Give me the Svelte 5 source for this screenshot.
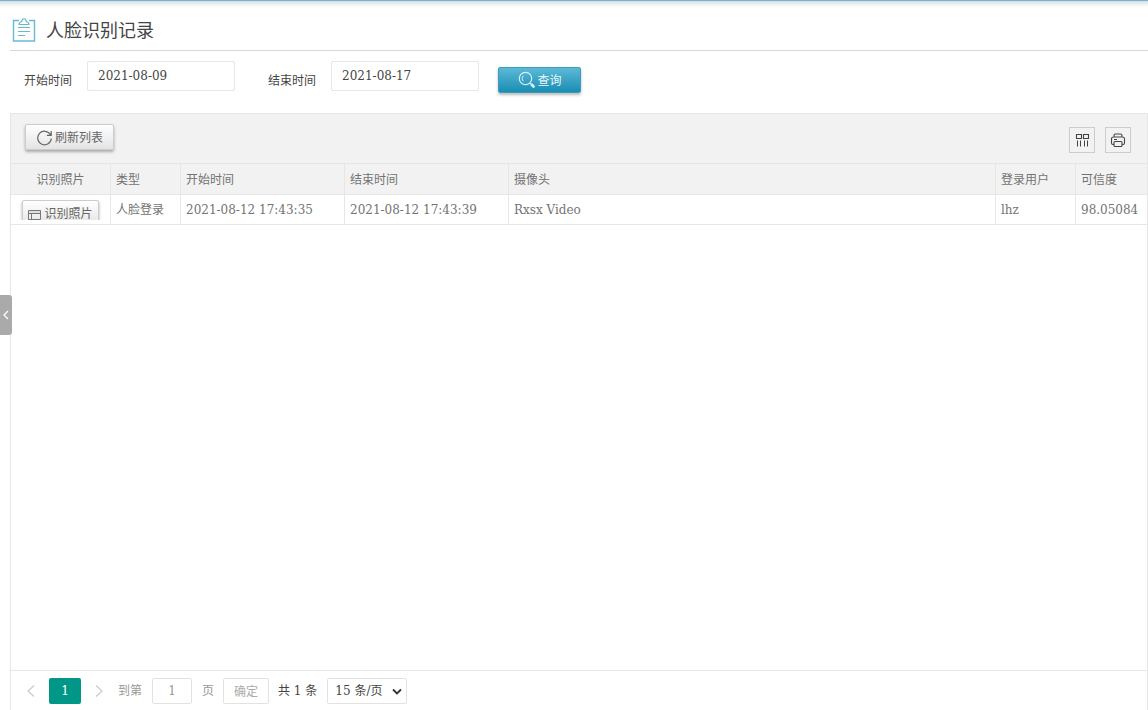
<script>
  let startDate = $state('2021-08-09');
  let endDate = $state('2021-08-17');
  let page = $state(1);
  let pageSize = $state('15');

  const rows = [
    {
      type: '人脸登录',
      start: '2021-08-12 17:43:35',
      end: '2021-08-12 17:43:39',
      camera: 'Rxsx Video',
      user: 'lhz',
      score: '98.05084'
    }
  ];
</script>

<div class="page">
  <header class="title">
    <svg width="24" height="24" viewBox="0 0 24 24" fill="none" stroke="#67b9d3" aria-hidden="true">
      <path d="M7 2.500H1.500v20.500h21v-20.500H17" stroke-width="1.400" />
      <path d="M7 6.500q.2-2.500 2.800-3C9.800-.2 14.200-.2 14.200 3.500q2.600.5 2.800 3z" stroke-width="1.200" />
      <path d="M6 9.500h12M6 13.500h12M6 17.500h7" stroke-width="1.100" />
    </svg>
    <h1>人脸识别记录</h1>
  </header>

  <form class="search" onsubmit={(e) => e.preventDefault()}>
    <label for="start">开始时间</label>
    <input id="start" type="text" bind:value={startDate} />
    <label class="second" for="end">结束时间</label>
    <input id="end" type="text" bind:value={endDate} />
    <button class="query" type="submit">
      <svg width="18" height="18" viewBox="0 0 18 18" fill="none" stroke="#d4f0f8" aria-hidden="true">
        <circle cx="7.500" cy="7.500" r="6.200" stroke-width="1.200" />
        <path d="M5.200 10.200a4 4 0 0 1 0-5.400" />
        <path d="M12 12l1.500 1.500" />
        <path d="M13.800 13.800l1.700 1.700" stroke-width="2.800" stroke-linecap="round" />
      </svg>
      <span>查询</span>
    </button>
  </form>

  <main class="grid">
    <div class="toolbar">
      <button class="raised refresh" type="button">
        <svg width="17" height="17" viewBox="0 0 17 17" fill="none" stroke="#666" stroke-width="1.200" aria-hidden="true">
          <path d="M14.500 5.800A6.800 6.800 0 1 0 15.300 9.500M15.200 2v4.300h-4.300" />
        </svg>
        <span>刷新列表</span>
      </button>
      <div class="tools">
        <button type="button" aria-label="筛选列">
          <svg width="16" height="16" viewBox="0 0 16 16" fill="none" stroke="#444" aria-hidden="true">
            <path d="M2.500 2.500h5v4h-5zM9.500 2.500h5v4h-5z" stroke-width="1.100" />
            <path d="M3.500 8.500v6M6.500 8.500v6M10.500 8.500v6M13.500 8.500v6" />
          </svg>
        </button>
        <button type="button" aria-label="打印">
          <svg width="16" height="16" viewBox="0 0 16 16" fill="none" stroke="#444" stroke-width="1.100" aria-hidden="true">
            <path d="M4 5V3.500q0-1.500 1.500-1.500h5q1.500 0 1.500 1.500V5M4 12.500H3q-1.500 0-1.500-1.500V7q0-2 2-2h9q2 0 2 2v4q0 1.500-1.500 1.500h-1M4 7.500h3" />
            <rect x="4" y="9.500" width="8" height="5" rx="1" />
          </svg>
        </button>
      </div>
    </div>

    <table>
      <colgroup>
        <col class="c-photo" /><col class="c-type" /><col class="c-time" /><col class="c-time" />
        <col /><col class="c-user" /><col class="c-score" />
      </colgroup>
      <thead>
        <tr>
          <th class="photo">识别照片</th>
          <th>类型</th>
          <th>开始时间</th>
          <th>结束时间</th>
          <th>摄像头</th>
          <th>登录用户</th>
          <th>可信度</th>
        </tr>
      </thead>
      <tbody>
        {#each rows as row}
          <tr>
            <td class="photo">
              <div class="clip">
                <button class="raised small" type="button">
                  <svg width="13" height="13" viewBox="0 0 13 13" fill="none" stroke="#777" aria-hidden="true">
                    <path d="M.5 3.500h12v9H.5zM.5 6.500h12M3.500 6.500v6" />
                    <path d="M1 5h11" stroke="#ccc" />
                  </svg>
                  <span>识别照片</span>
                </button>
              </div>
            </td>
            <td>{row.type}</td>
            <td>{row.start}</td>
            <td>{row.end}</td>
            <td>{row.camera}</td>
            <td>{row.user}</td>
            <td>{row.score}</td>
          </tr>
        {/each}
      </tbody>
    </table>

    <nav class="pager" aria-label="分页">
      <button class="arrow" type="button" aria-label="上一页">
        <svg width="10" height="14" viewBox="0 0 10 14" fill="none" stroke="#ccc" stroke-width="1.300"><path d="M8 1.500L2 7l6 5.500" /></svg>
      </button>
      <button class="current" type="button" aria-current="page">1</button>
      <button class="arrow" type="button" aria-label="下一页">
        <svg width="10" height="14" viewBox="0 0 10 14" fill="none" stroke="#ccc" stroke-width="1.300"><path d="M2 1.500L8 7l-6 5.500" /></svg>
      </button>
      <label class="jump">到第 <input type="text" bind:value={page} /> 页</label>
      <button class="confirm" type="button"><span>确定</span></button>
      <span class="total">共 1 条</span>
      <span class="size">
        <select aria-label="每页条数" bind:value={pageSize}>
          <option value="15">15 条/页</option>
          <option value="30">30 条/页</option>
        </select>
        <svg width="10" height="8" viewBox="0 0 10 8" fill="none" stroke="#333" stroke-width="1.800" aria-hidden="true"><path d="M1 1.500l4 4 4-4" /></svg>
      </span>
    </nav>
  </main>

  <button class="handle" type="button" aria-label="收起侧栏">
    <svg width="6" height="10" viewBox="0 0 6 10" fill="none" stroke="#fff" stroke-width="1.200"><path d="M5 1L1 5l4 4" /></svg>
  </button>
</div>

<style>
  :global(body) {
    background: #fff;
  }
  .page,
  .page * {
    box-sizing: border-box;
  }
  .page {
    position: relative;
    display: flex;
    flex-direction: column;
    min-height: 100vh;
    padding-left: 10px;
    border-top: 1px solid #6ab6d6;
    background: linear-gradient(#ddd, #fff) 0 0 / 100% 6px no-repeat;
    font: 12px/18px 'DejaVu Serif', 'Noto Sans CJK SC', serif;
    color: #444;
  }
  button,
  input,
  select {
    margin: 0;
    font: inherit;
    color: inherit;
    border-radius: 2px;
  }
  button {
    display: flex;
    align-items: center;
    justify-content: center;
    padding: 0;
    white-space: nowrap;
  }
  button span {
    padding-top: 2px;
  }
  .title {
    display: flex;
    align-items: center;
    gap: 10px;
    height: 50px;
    padding: 8px 2px 0;
    border-bottom: 1px solid #d8d8d8;
  }
  h1 {
    margin: 0;
    padding-top: 2px;
    font-size: 18px;
    line-height: 24px;
    font-weight: 400;
  }
  .search {
    display: flex;
    align-items: flex-start;
    height: 62px;
    padding: 10px 14px 0;
  }
  .search label {
    padding-top: 11px;
    margin-right: 15px;
  }
  .search .second {
    margin-left: 33px;
  }
  .search input {
    width: 148px;
    height: 30px;
    padding: 0 10px;
    border: 1px solid #e6e6e6;
    background: #fff;
  }
  .query {
    gap: 2px;
    width: 83px;
    height: 26px;
    margin: 6px 0 0 19px;
    border: 1px solid #3a9dbd;
    background: linear-gradient(#5cb9d6, #1a8db3);
    box-shadow: 0 2px 3px #bbb;
    color: #e8f6fa;
  }
  .grid {
    flex: 1;
    display: flex;
    flex-direction: column;
    border: 1px solid #e6e6e6;
    border-bottom: 0;
  }
  .toolbar {
    display: flex;
    justify-content: space-between;
    height: 50px;
    padding: 10px 16px 0 14px;
    background: #f2f2f2;
    border-bottom: 1px solid #e6e6e6;
  }
  .raised {
    border: 1px solid #ccc;
    background: linear-gradient(#fff, #e4e4e4);
    box-shadow: 0 2px 3px #aaa;
    color: #666;
  }
  .refresh {
    gap: 2px;
    width: 89px;
    height: 26px;
  }
  .tools {
    display: flex;
    gap: 10px;
    padding-top: 3px;
  }
  .tools button {
    width: 26px;
    height: 26px;
    border: 1px solid #ccc;
    border-radius: 0;
    background: transparent;
  }
  table {
    width: 100%;
    table-layout: fixed;
    border-collapse: separate;
    border-spacing: 0;
    color: #737373;
  }
  .c-photo {
    width: 100px;
  }
  .c-type {
    width: 70px;
  }
  .c-time {
    width: 164px;
  }
  .c-user {
    width: 80px;
  }
  .c-score {
    width: 71px;
  }
  th,
  td {
    height: 30px;
    padding: 0 5px;
    border: 0 solid #e6e6e6;
    border-width: 0 1px 1px 0;
    font-weight: 400;
    text-align: left;
    white-space: nowrap;
  }
  th {
    height: 31px;
    padding-top: 2px;
    background: #f2f2f2;
  }
  th:last-child,
  td:last-child {
    border-right: 0;
  }
  th.photo {
    text-align: center;
  }
  td.photo {
    padding: 0 8px;
    vertical-align: top;
  }
  .clip {
    height: 25px;
    padding: 5px 3px 0;
    overflow: hidden;
  }
  .small {
    gap: 3px;
    width: 77px;
    height: 26px;
  }
  .pager {
    display: flex;
    align-items: center;
    height: 40px;
    margin-top: auto;
    padding: 0 11px;
    border-top: 1px solid #e6e6e6;
    color: #999;
  }
  .arrow {
    width: 18px;
    height: 26px;
    border: 0;
    background: none;
  }
  .current {
    width: 32px;
    height: 26px;
    margin: 0 9px;
    border: 0;
    background: #009688;
    color: #fff;
  }
  .jump {
    display: flex;
    align-items: center;
    gap: 10px;
    margin-left: 10px;
  }
  .jump input {
    width: 40px;
    height: 26px;
    padding: 0;
    border: 1px solid #e2e2e2;
    text-align: center;
  }
  .confirm {
    width: 46px;
    height: 26px;
    margin: 0 9px;
    border: 1px solid #e2e2e2;
    background: #fff;
    color: #aaa;
  }
  .total {
    color: #444;
  }
  .size {
    position: relative;
    display: flex;
    margin-left: 10px;
    color: #444;
  }
  .size select {
    appearance: none;
    width: 80px;
    height: 26px;
    padding: 0 7px;
    border: 1px solid #e2e2e2;
    background: #fff;
  }
  .size svg {
    position: absolute;
    right: 5px;
    top: 10px;
    pointer-events: none;
  }
  .handle {
    position: absolute;
    left: 0;
    top: 294px;
    width: 12px;
    height: 40px;
    border: 0;
    border-radius: 0 3px 3px 0;
    background: #aaa;
  }
</style>
